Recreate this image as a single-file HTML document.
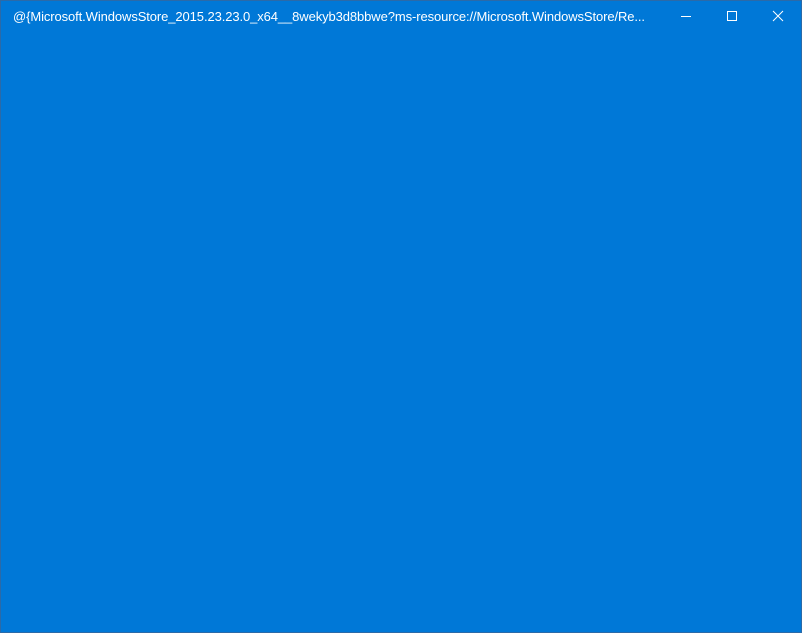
<!DOCTYPE html>
<html><head><meta charset="utf-8"><style>
html,body{margin:0;padding:0;}
body{width:802px;height:633px;background:#0078d7;position:relative;overflow:hidden;box-sizing:border-box;border:1px solid #2b6aa8;}
.t{position:absolute;left:12px;top:8px;color:#fff;font:13px "Liberation Sans",sans-serif;white-space:nowrap;letter-spacing:-0.1px;}
svg{position:absolute;top:0;}
</style></head><body>
<div class="t">@{Microsoft.WindowsStore_2015.23.23.0_x64__8wekyb3d8bbwe?ms-resource://Microsoft.WindowsStore/Re...</div>
<svg width="802" height="32" style="left:-1px;top:-1px">
<line x1="681" y1="16.5" x2="691" y2="16.5" stroke="#fff" stroke-width="1"/>
<rect x="727.5" y="11.5" width="9" height="9" fill="none" stroke="#fff" stroke-width="1"/>
<path d="M773 11 L783 21 M783 11 L773 21" stroke="#fff" stroke-width="1"/>
</svg>
</body></html>
